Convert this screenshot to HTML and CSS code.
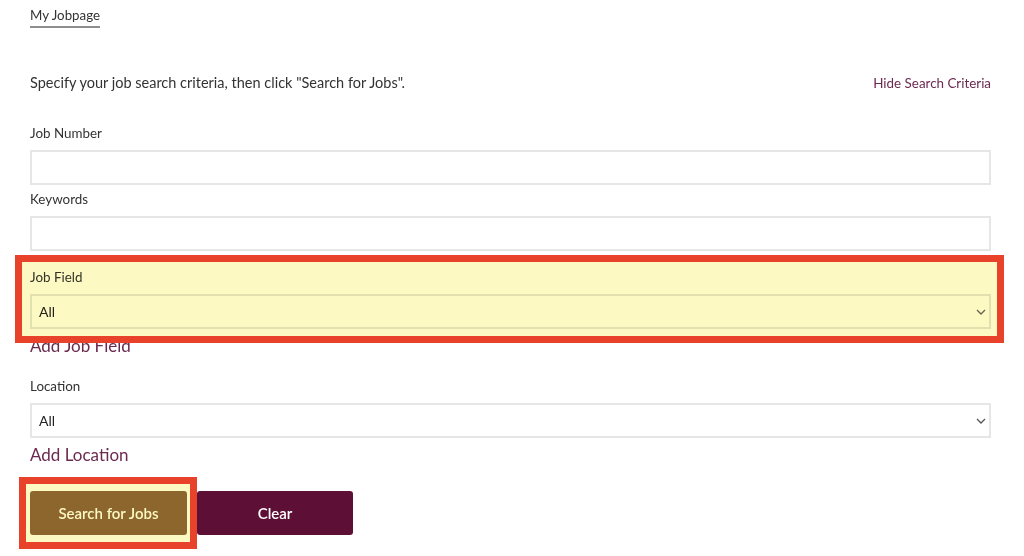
FILE: index.html
```html
<!DOCTYPE html>
<html lang="en">
<head>
<meta charset="utf-8">
<title>My Jobpage</title>
<link rel="stylesheet" href="styles.css">
</head>
<body>
<div class="page">
  <nav class="tabs"><a class="tab" href="#">My Jobpage</a></nav>

  <div class="intro">
    <p>Specify your job search criteria, then click "Search for Jobs".</p>
    <a class="hide-link" href="#">Hide Search Criteria</a>
  </div>

  <form class="criteria">
    <div class="field f-number">
      <label>Job Number</label>
      <input class="input" type="text">
    </div>
    <div class="field f-keywords">
      <label>Keywords</label>
      <input class="input" type="text">
    </div>
    <div class="field f-jobfield">
      <label>Job Field</label>
      <div class="select">
        <select><option>All</option></select>
        <svg class="chev" width="10" height="6" viewBox="0 0 10 6"><path d="M1 1l4 4 4-4" fill="none" stroke="#666" stroke-width="1.3"/></svg>
      </div>
    </div>
    <a class="add-link" href="#">Add Job Field</a>
    <div class="field f-location">
      <label>Location</label>
      <div class="select">
        <select><option>All</option></select>
        <svg class="chev" width="10" height="6" viewBox="0 0 10 6"><path d="M1 1l4 4 4-4" fill="none" stroke="#555" stroke-width="1.3"/></svg>
      </div>
    </div>
    <a class="add-link" href="#">Add Location</a>
    <div class="actions">
      <button type="button" class="btn btn-search">Search for Jobs</button>
      <button type="button" class="btn btn-clear">Clear</button>
    </div>
  </form>

  <div class="hl-fill hl-1"></div>
  <div class="hl-frame hl-1"></div>
  <div class="hl-fill hl-2"></div>
  <div class="hl-frame hl-2"></div>
</div>
</body>
</html>
```

FILE: styles.css
```css
html, body {
  margin: 0;
  padding: 0;
  background: #fff;
}
body {
  font-family: Lato, "Open Sans", sans-serif;
  color: #333;
}
.page {
  position: relative;
  padding: 0 33px 0 30px;
  height: 556px;
  box-sizing: border-box;
}
.tabs {
  padding-top: 5px;
  display: flex;
}
.tab {
  font-size: 13.3px;
  line-height: 20px;
  color: #333;
  text-decoration: none;
  padding-bottom: 1px;
  border-bottom: 2px solid #8e8e8e;
}
.intro {
  margin-top: 45px;
  display: flex;
  justify-content: space-between;
  align-items: center;
  height: 20px;
}
.intro p {
  margin: 0;
  font-size: 14.5px;
  line-height: 20px;
}
.hide-link {
  font-size: 13.4px;
  line-height: 20px;
  color: #6b2a50;
  text-decoration: none;
}
.criteria {
  display: flex;
  flex-direction: column;
}
.field label {
  display: block;
  font-size: 13.4px;
  line-height: 20px;
  margin-bottom: 7px;
}
.f-number { margin-top: 30px; }
.f-keywords { margin-top: 4px; }
.f-jobfield { margin-top: 16px; }
.f-location { margin-top: 19px; }
.input {
  display: block;
  width: 100%;
  box-sizing: border-box;
  height: 35px;
  border: 2px solid #e6e6e6;
  background: #fff;
  margin: 0;
  padding: 0 8px;
  font: inherit;
}
.select {
  display: flex;
  align-items: center;
  height: 35px;
  box-sizing: border-box;
  border: 2px solid #e6e6e6;
  background: #fff;
  padding-right: 3px;
}
.select select {
  flex: 1;
  appearance: none;
  -webkit-appearance: none;
  border: none;
  background: transparent;
  font-family: Lato, "Open Sans", sans-serif;
  font-size: 14px;
  color: #222;
  padding: 0 7px;
  height: 100%;
  outline: none;
}
.chev { flex: none; }
.add-link {
  margin-top: 6px;
  font-size: 17px;
  line-height: 22px;
  color: #6b2a50;
  text-decoration: none;
  align-self: flex-start;
}
.actions {
  margin-top: 25px;
  display: flex;
  gap: 10px;
}
.btn {
  height: 44px;
  border: none;
  border-radius: 3px;
  font-family: Lato, "Open Sans", sans-serif;
  font-size: 15px;
  font-weight: 600;
  color: #fff;
  cursor: pointer;
}
.btn-search {
  width: 157px;
  background: #8f683b;
}
.btn-clear {
  width: 156px;
  background: #5e0f35;
}

/* annotation highlights */
.hl-fill {
  position: absolute;
  background: #fcf9c2;
  mix-blend-mode: multiply;
}
.hl-frame {
  position: absolute;
  box-sizing: border-box;
  border: 7px solid #e8432a;
}
.hl-1 {
  left: 15px;
  top: 255px;
  width: 989px;
  height: 88px;
}
.hl-2 {
  left: 19px;
  top: 477px;
  width: 178px;
  height: 72px;
}
```
